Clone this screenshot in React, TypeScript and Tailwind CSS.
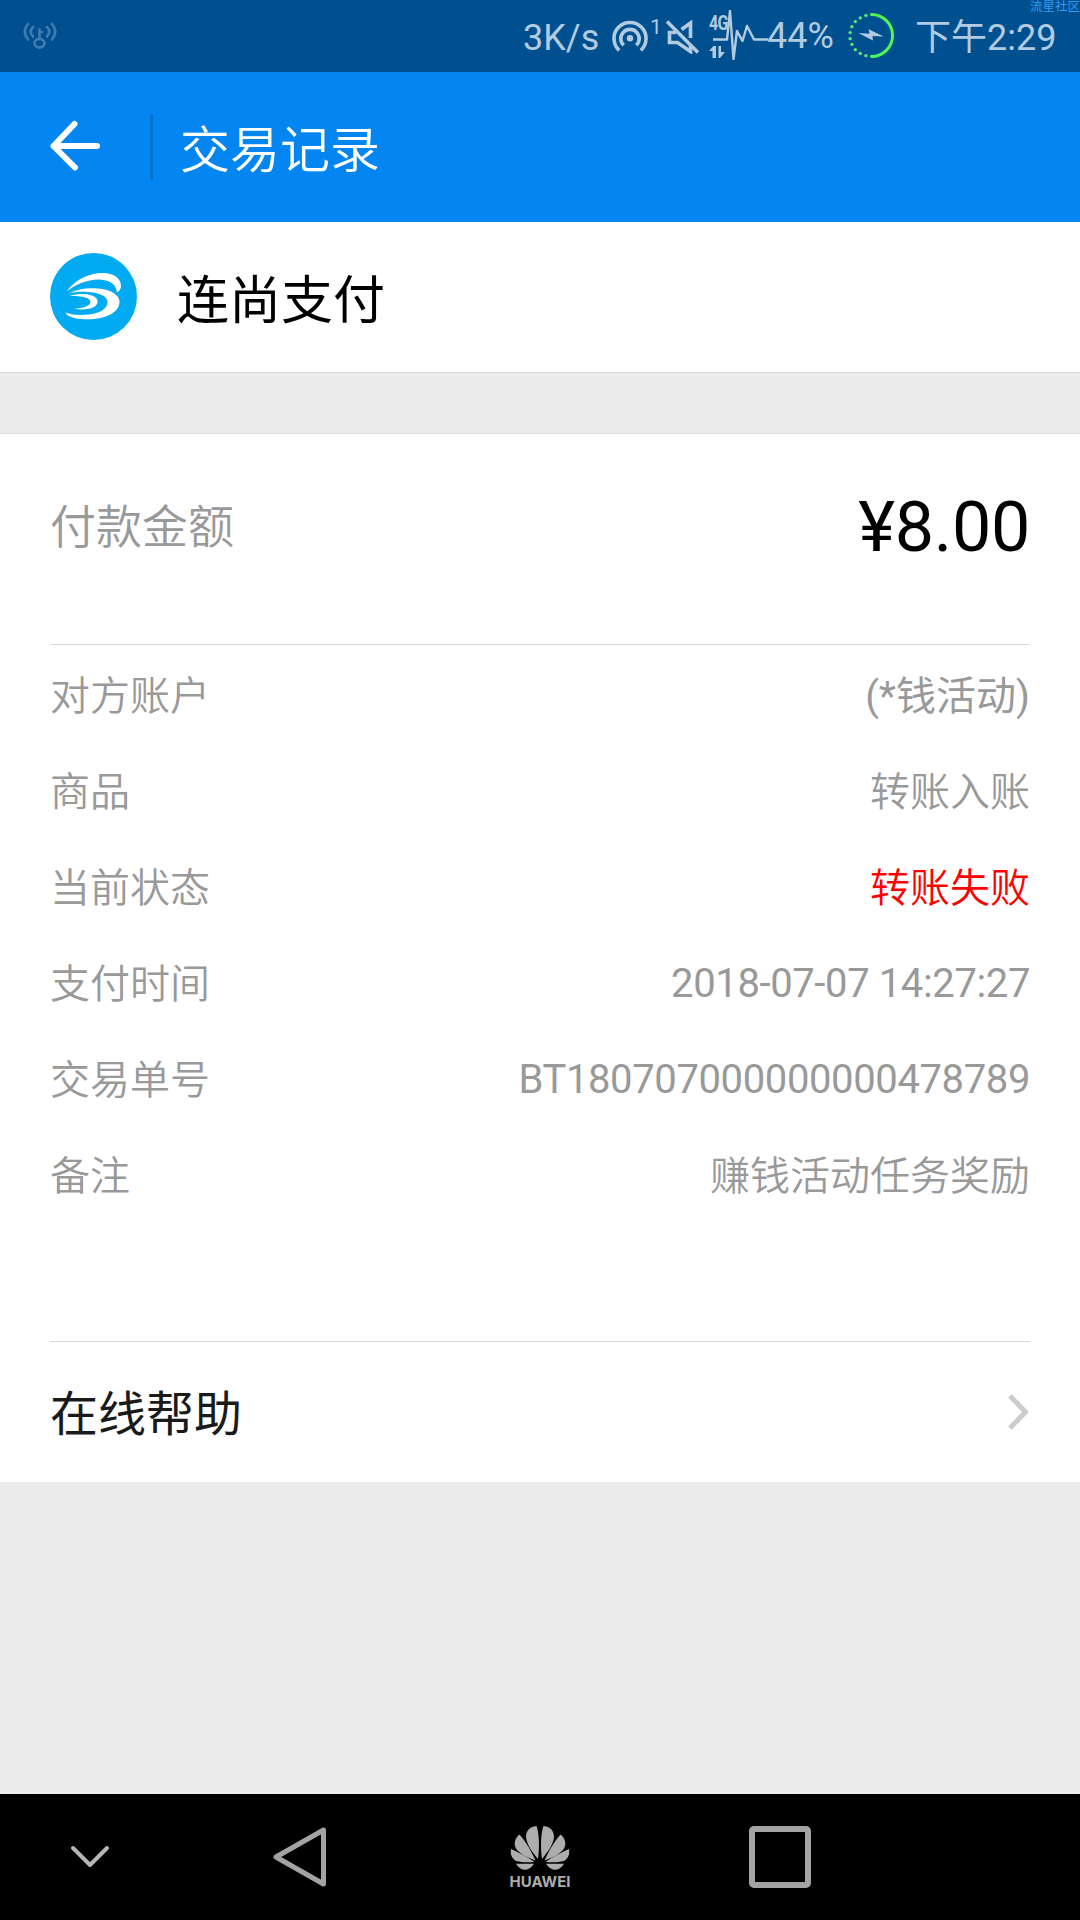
import React from 'react';

const details = [
  { label: '对方账户', value: '(*钱活动)', regular: true },
  { label: '商品', value: '转账入账' },
  { label: '当前状态', value: '转账失败', failed: true },
  { label: '支付时间', value: '2018-07-07 14:27:27', numeric: true },
  { label: '交易单号', value: 'BT180707000000000478789', numeric: true },
  { label: '备注', value: '赚钱活动任务奖励' },
];

const WifiKeyIcon = () => (
  <svg width="34" height="28" viewBox="0 0 34 28" fill="none" stroke="#3f7db0" strokeWidth="2.6" strokeLinecap="round">
    <path d="M5 2Q-1.5 9.500 5 17.500M10 5Q5.500 9.500 10 14.500M29 2Q35.500 9.500 29 17.500M24 5Q28.500 9.500 24 14.500" />
    <path d="M16.500 7.500V16M16.500 10H19" />
    <ellipse cx="16.500" cy="21.200" rx="5" ry="4.300" />
  </svg>
);

const HotspotIcon = () => (
  <svg width="36" height="32" viewBox="0 0 36 32" fill="none" stroke="#b2cbe0" strokeWidth="3.600">
    <path d="M7.200 30.300A16 16 0 1 1 28.800 30.300" />
    <path d="M11.700 25.300A9.200 9.200 0 1 1 24.300 25.300" />
    <circle cx="18" cy="18.300" r="3.200" fill="#b2cbe0" stroke="none" />
  </svg>
);

const MuteIcon = () => (
  <svg width="34" height="34" viewBox="0 0 34 34" fill="none" stroke="#b2cbe0" strokeWidth="3.600">
    <path d="M1 1.500L32 32.500" />
    <path d="M10 12.500H3.500V22.500H11.500L24.500 31.500V25" />
    <path d="M15.500 9.500L24.500 3V18" />
  </svg>
);

const PulseIcon = () => (
  <svg width="56" height="50" viewBox="0 0 56 50" fill="none" stroke="#b2cbe0" strokeWidth="2.400" strokeLinejoin="round">
    <path d="M0 29.500H14L17 1L20.500 49L24 21L29.500 31L34 16L41 29.500H55" />
  </svg>
);

const DataArrowsIcon = () => (
  <svg width="17" height="12" viewBox="0 0 17 12" fill="#b2cbe0">
    <path d="M4.500 0H7V12H3.500V5H0ZM9.500 0H12V6H16L11 12H9.500Z" />
  </svg>
);

const ChargeIcon = () => (
  <svg width="47" height="47" viewBox="0 0 48 48" fill="none">
    <path d="M24 2.500A21.500 21.500 0 0 1 24 45.500" stroke="#4bfa52" strokeWidth="3" strokeLinecap="round" />
    <g fill="#5bea7a">
      <circle cx="18.300" cy="3.500" r="1.700" />
      <circle cx="12.500" cy="6" r="1.700" />
      <circle cx="7.500" cy="9.800" r="1.700" />
      <circle cx="4" cy="15" r="1.700" />
      <circle cx="2.200" cy="21" r="1.700" />
      <circle cx="2.200" cy="27.200" r="1.700" />
      <circle cx="4" cy="33" r="1.700" />
      <circle cx="7.500" cy="38.500" r="1.700" />
      <circle cx="12.500" cy="42.300" r="1.700" />
      <circle cx="18.300" cy="44.600" r="1.700" />
    </g>
    <path d="M10.500 21.500L22 22.300L21 17.500L36.500 25L25 24.500L25.500 29Z" fill="#b2cbe0" />
  </svg>
);

const PayLogo = () => (
  <svg className="mb-[2px]" width="87" height="87" viewBox="0 0 87 87">
    <circle cx="43.500" cy="43.500" r="43.500" fill="#02abf1" />
    <g fill="#fff">
      <path d="M16.500 38.500C26 26 40 19.500 54 20C65 20.500 71 26 71 33C71 36 69 38.500 67 39.500C66.500 32 61 27.500 51 26.700C39 25.800 27 31 16.500 38.500Z" />
      <path d="M18.500 40.500C28 35.500 38 34.500 48 35.500C61 36.500 69.500 42 69.500 49C69.500 59 56 66.300 38 66.300C27 66.300 17.500 64.500 15.500 59.500C22 62 31 62.500 39 61.500C51 60 58 55 57.500 48.500C57 42.500 48 39.500 38 39C30 38.500 24 39 18.500 40.500Z" />
      <path d="M20 43C27 40.500 35 40.500 40 42C45.500 43.500 48 46 47.500 49.500C46.500 55.500 34 58 23.500 55.500C32 55.500 40 53.500 40.500 49C41 44.500 30 42.500 20 43Z" />
    </g>
  </svg>
);

const HuaweiLogo = () => (
  <svg width="60" height="46" viewBox="0 0 60 46" fill="#adadad">
    <path d="M28 34C29.500 24 29.500 9 26.500 1C19 1.500 16 6.500 16 12C16.500 20 24 29 28 34Z" />
    <path d="M32 34C30.500 24 30.500 9 33.500 1C41 1.500 44 6.500 44 12C43.500 20 36 29 32 34Z" />
    <path d="M25.500 35.500C21 25 15 16 9.500 9.500C4.500 13.500 3.500 19 6 23.500C9.500 29 18.500 33 25.500 35.500Z" />
    <path d="M34.500 35.500C39 25 45 16 50.500 9.500C55.500 13.500 56.500 19 54 23.500C50.500 29 41.500 33 34.500 35.500Z" />
    <path d="M24.500 37C16 31 8 27 1 24C0 29.500 2 34 6.500 36C11 37.500 19 37.500 24.500 37Z" />
    <path d="M35.500 37C44 31 52 27 59 24C60 29.500 58 34 53.500 36C49 37.500 41 37.500 35.500 37Z" />
    <path d="M24 38.700H6C9 43.500 13 45.500 17 44.500C20 43.500 22.500 41 24 38.700Z" />
    <path d="M36 38.700H54C51 43.500 47 45.500 43 44.500C40 43.500 37.500 41 36 38.700Z" />
  </svg>
);

const StatusBar = () => (
  <div className="relative flex h-[72px] items-start bg-[#00508f] text-[36px] leading-[72px] text-[#b2cbe0] whitespace-nowrap">
    <div className="ml-[23px] mt-[22px] w-[500px] shrink-0">
      <WifiKeyIcon />
    </div>
    <span className="mt-[2px] w-[89px] shrink-0">3K/s</span>
    <div className="mt-[20px] w-[38px] shrink-0">
      <HotspotIcon />
    </div>
    <span className="mt-[16px] w-[16px] shrink-0 text-[21px] leading-[22px]">1</span>
    <div className="mt-[20px] w-[43px] shrink-0">
      <MuteIcon />
    </div>
    <div className="relative mt-[10px] w-[58px] shrink-0 pl-[4px]">
      <PulseIcon />
      <span className="absolute left-0 top-[2px] origin-left scale-x-[0.8] text-[20px] font-bold leading-[22px] tracking-[-1px]">4G</span>
      <div className="absolute left-0 top-[36px]">
        <DataArrowsIcon />
      </div>
    </div>
    <span className="w-[81px] shrink-0">44%</span>
    <div className="mt-[12px] w-[67px] shrink-0">
      <ChargeIcon />
    </div>
    <span className="mt-[2px] shrink-0">下午2:29</span>
    <span className="absolute right-0 top-0 text-[12.500px] leading-[13px] text-[#2f9cf5]">流星社区</span>
  </div>
);

const App = () => {
  return (
    <div className="flex h-[1920px] w-[1080px] flex-col overflow-hidden bg-[#ececec] font-[Roboto,'Noto_Sans_CJK_SC',sans-serif] font-normal">
      <StatusBar />

      <header className="flex h-[150px] shrink-0 items-center bg-[#0386f2] pl-[50px] text-white">
        <svg className="mb-[2px]" width="52" height="52" viewBox="0 0 52 52" fill="none" stroke="currentColor" strokeWidth="6" strokeLinecap="round" strokeLinejoin="round">
          <path d="M24.500 4L3.500 26L25 47.500M3.500 26H47" />
        </svg>
        <div className="ml-[48px] h-[66px] w-[3px] bg-[#0272cc]" />
        <h1 className="ml-[27px] mt-2 text-[50px] font-[350] leading-[60px]">交易记录</h1>
      </header>

      <section className="flex h-[151px] shrink-0 items-center border-b border-[#d9d9d9] bg-white pl-[50px]">
        <PayLogo />
        <span className="ml-[40px] mt-[10px] text-[52px] leading-[60px] text-black">连尚支付</span>
      </section>

      <main className="mt-[60px] flex h-[1049px] shrink-0 flex-col border-t border-[#d9d9d9] bg-white px-[50px]">
        <div className="flex h-[211px] items-start justify-between border-b border-[#d9d9d9]">
          <span className="mt-[63px] text-[46px] font-[350] leading-[60px] text-[#999]">付款金额</span>
          <span className="mt-[52px] text-[70px] leading-[82px] tracking-[-0.3px] text-black">¥8.00</span>
        </div>

        <div className="flex h-[697px] flex-col border-b border-[#d9d9d9] pt-[4px]">
          {details.map((item) => (
            <div key={item.label} className="flex h-24 items-center justify-between text-[40px] font-[350] text-[#999]">
              <span>{item.label}</span>
              {item.numeric ? (
                <span className="mb-[2px] font-normal tracking-[-0.38px]">{item.value}</span>
              ) : (
                <span className={item.failed ? 'text-[#f00]' : item.regular ? 'font-normal' : ''}>{item.value}</span>
              )}
            </div>
          ))}
        </div>

        <div className="flex flex-1 items-center justify-between">
          <span className="mt-[6px] text-[48px] leading-[60px] text-[#1a1a1a]">在线帮助</span>
          <svg width="23" height="36" viewBox="0 0 23 36" fill="none" stroke="#ccc" strokeWidth="5">
            <path d="M3 2L18.500 18L3 34" />
          </svg>
        </div>
      </main>

      <nav className="mt-auto flex h-[126px] shrink-0 items-center bg-black">
        <svg className="ml-[70px]" width="40" height="24" viewBox="0 0 40 24" fill="none" stroke="#b5b5b5" strokeWidth="4" strokeLinecap="round" strokeLinejoin="round">
          <path d="M3 3L20 20L37 3" />
        </svg>
        <svg className="ml-[162px]" width="56" height="62" viewBox="0 0 56 62" fill="none" stroke="#a3a3a3" strokeWidth="5" strokeLinejoin="round">
          <path d="M4 31L51.500 4V58Z" />
        </svg>
        <div className="ml-[181px] flex w-[62px] flex-col items-center">
          <HuaweiLogo />
          <span className="mt-[3px] font-[Inter,sans-serif] text-[15px] font-bold leading-[15px] text-[#adadad]">HUAWEI</span>
        </div>
        <div className="ml-[178px] h-[62px] w-[62px] rounded-[5px] border-[6px] border-[#a3a3a3]" />
      </nav>
    </div>
  );
};

export default App;
